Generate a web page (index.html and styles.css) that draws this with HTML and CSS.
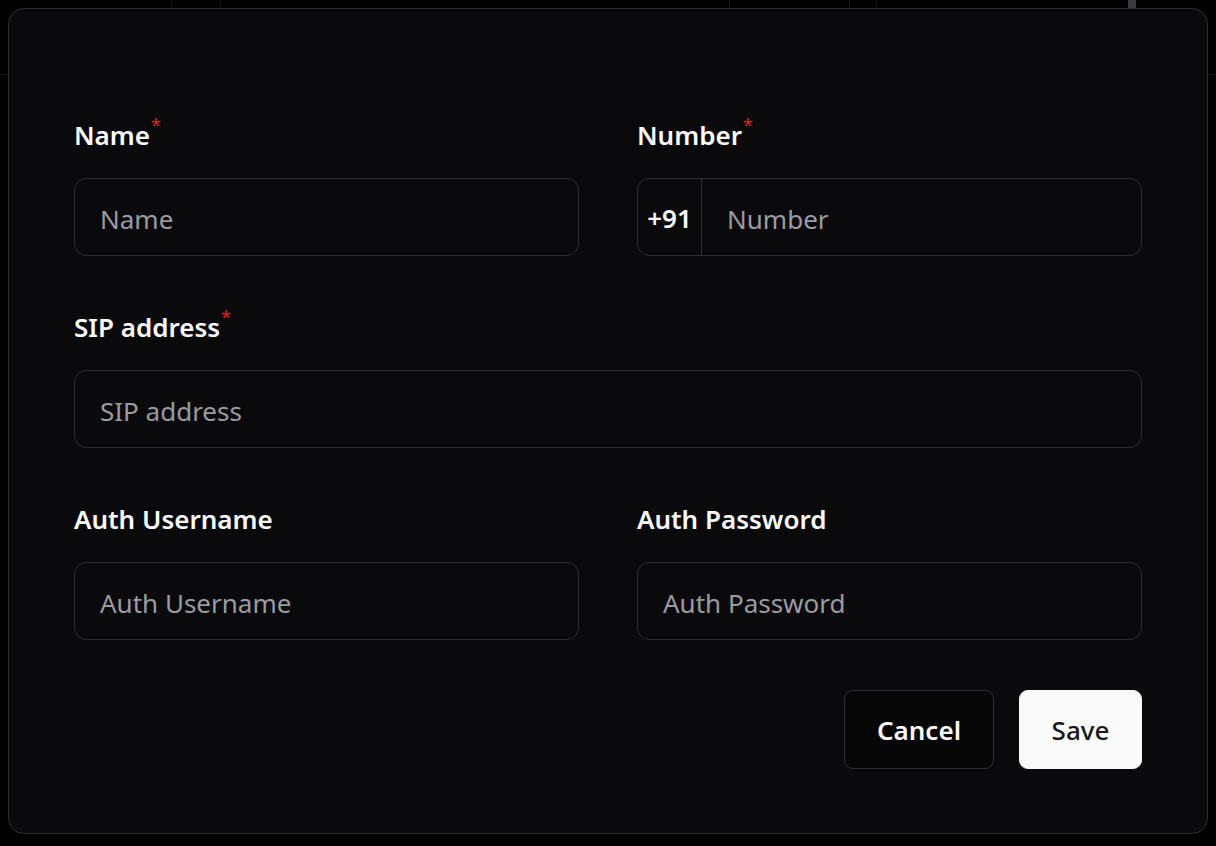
FILE: index.html
```html
<!DOCTYPE html>
<html lang="en">
<head>
<meta charset="utf-8">
<title>Edit contact</title>
<link rel="stylesheet" href="styles.css">
</head>
<body>
<div class="backdrop">
  <div class="bg-header">
    <div class="bg-col c1"></div>
    <div class="bg-col c2"></div>
    <div class="bg-col c3"></div>
    <div class="bg-col c4"></div>
    <div class="bg-col c5"></div>
    <div class="bg-col c6"></div>
  </div>
  <div class="scroll-thumb"></div>
</div>

<div class="modal">
  <form class="form">
    <div class="grid">
      <div class="field">
        <label class="label">Name<span class="req">*</span></label>
        <div class="input"><span class="ph">Name</span></div>
      </div>
      <div class="field">
        <label class="label">Number<span class="req">*</span></label>
        <div class="input with-prefix"><span class="prefix">+91</span><span class="ph">Number</span></div>
      </div>
      <div class="field span2">
        <label class="label">SIP address<span class="req">*</span></label>
        <div class="input"><span class="ph">SIP address</span></div>
      </div>
      <div class="field">
        <label class="label">Auth Username</label>
        <div class="input"><span class="ph">Auth Username</span></div>
      </div>
      <div class="field">
        <label class="label">Auth Password</label>
        <div class="input"><span class="ph">Auth Password</span></div>
      </div>
    </div>
    <div class="actions">
      <button type="button" class="btn btn-outline">Cancel</button>
      <button type="button" class="btn btn-primary">Save</button>
    </div>
  </form>
</div>
</body>
</html>
```

FILE: styles.css
```css
* { box-sizing: border-box; }

html, body {
  margin: 0;
  padding: 0;
  width: 1216px;
  height: 846px;
  overflow: hidden;
  background: #000;
  font-family: "Noto Sans", "Open Sans", sans-serif;
  color: #fafafa;
}

.backdrop {
  position: absolute;
  inset: 0;
}

.bg-header {
  display: flex;
  height: 75px;
  border-bottom: 1px solid #161618;
}

.bg-col { border-right: 1px solid #141416; height: 100%; }
.c1 { width: 172px; }
.c2 { width: 49px; }
.c3 { width: 509px; }
.c4 { width: 120px; }
.c5 { width: 27px; }
.c6 { flex: 1; border-right: none; }

.scroll-thumb {
  position: absolute;
  left: 1128px;
  top: 0;
  width: 8px;
  height: 8px;
  background: #3a3a3c;
}

.modal {
  position: absolute;
  left: 8px;
  top: 8px;
  width: 1200px;
  height: 826px;
  background: #0a0a0c;
  border: 1px solid #2e2e32;
  border-radius: 16px;
  padding: 108px 65px 0 65px;
}

.grid {
  display: grid;
  grid-template-columns: 505px 505px;
  column-gap: 58px;
  row-gap: 53px;
}

.span2 { grid-column: 1 / span 2; }

.field {
  display: flex;
  flex-direction: column;
  gap: 25px;
}

.label {
  font-size: 26px;
  font-weight: 600;
  line-height: 36px;
  color: #fafafa;
}

.req {
  color: #e0201c;
  font-size: 18px;
  font-weight: 400;
  vertical-align: 13px;
  line-height: 0;
  margin-left: 1px;
}

.input {
  height: 78px;
  border: 1px solid #2e2e32;
  border-radius: 12px;
  display: flex;
  align-items: center;
  padding: 3px 25px 0;
  font-size: 26px;
}

.ph { color: #9b9ba3; }

.with-prefix { padding-left: 0; padding-top: 0; }
.with-prefix .ph { padding-top: 3px; }

.prefix {
  height: 100%;
  width: 64px;
  display: flex;
  align-items: center;
  justify-content: center;
  border-right: 1px solid #2e2e32;
  margin-right: 25px;
  padding-top: 2px;
  font-weight: 600;
  color: #fafafa;
}

.actions {
  display: flex;
  justify-content: flex-end;
  gap: 25px;
  margin-top: 50px;
}

.btn {
  height: 79px;
  border-radius: 9px;
  font-family: inherit;
  font-size: 26px;
  font-weight: 600;
  cursor: pointer;
}

.btn-outline {
  width: 150px;
  background: #060607;
  color: #fafafa;
  border: 1px solid #2e2e32;
}

.btn-primary {
  width: 123px;
  background: #fafafa;
  color: #18181b;
  border: 1px solid #fafafa;
  font-weight: 500;
}
```
